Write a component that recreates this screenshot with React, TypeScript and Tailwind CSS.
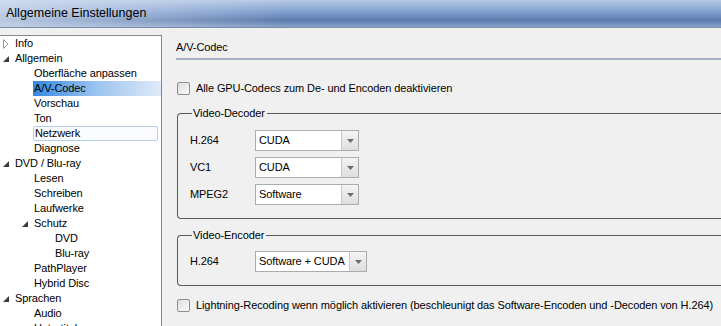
import React from "react";

type TreeItem = {
  label: string;
  level: number;
  arrow?: "open" | "closed";
  selected?: boolean;
  hover?: boolean;
};

const treeItems: TreeItem[] = [
  { label: "Info", level: 0, arrow: "closed" },
  { label: "Allgemein", level: 0, arrow: "open" },
  { label: "Oberfläche anpassen", level: 1 },
  { label: "A/V-Codec", level: 1, selected: true },
  { label: "Vorschau", level: 1 },
  { label: "Ton", level: 1 },
  { label: "Netzwerk", level: 1, hover: true },
  { label: "Diagnose", level: 1 },
  { label: "DVD / Blu-ray", level: 0, arrow: "open" },
  { label: "Lesen", level: 1 },
  { label: "Schreiben", level: 1 },
  { label: "Laufwerke", level: 1 },
  { label: "Schutz", level: 1, arrow: "open" },
  { label: "DVD", level: 2 },
  { label: "Blu-ray", level: 2 },
  { label: "PathPlayer", level: 1 },
  { label: "Hybrid Disc", level: 1 },
  { label: "Sprachen", level: 0, arrow: "open" },
  { label: "Audio", level: 1 },
  { label: "Untertitel", level: 1 },
];

const indent: Record<number, string> = {
  0: "pl-[1px]",
  1: "pl-[20px]",
  2: "pl-[41px]",
};

function Arrow({ kind }: { kind?: "open" | "closed" }) {
  if (kind === "closed") {
    return (
      <svg width="13" height="15" viewBox="0 0 13 15" className="shrink-0">
        <path d="M2.5 3.5 L7 8 L2.5 12.5 Z" fill="none" stroke="#9a9a9a" />
      </svg>
    );
  }
  if (kind === "open") {
    return (
      <svg width="13" height="15" viewBox="0 0 13 15" className="shrink-0">
        <path d="M8 5 L8 11 L2 11 Z" fill="#3c3c3c" />
      </svg>
    );
  }
  return <span className="w-[13px] shrink-0" />;
}

function TreeRow({ item }: { item: TreeItem }) {
  return (
    <div className={`flex h-[15px] items-center whitespace-nowrap ${indent[item.level]}`}>
      <Arrow kind={item.arrow} />
      {item.selected ? (
        <div className="flex h-[15px] flex-1 items-center bg-[linear-gradient(to_right,#3588e2,#9cc4ef_50%,#dfeaf8)] pl-[1px]">
          {item.label}
        </div>
      ) : item.hover ? (
        <div className="mr-[3px] flex h-[15px] flex-1 items-center rounded-[2px] border border-[#b4cfee] bg-[#fafcff] pl-[1px]">
          {item.label}
        </div>
      ) : (
        <div className="pl-[1px]">{item.label}</div>
      )}
    </div>
  );
}

function Checkbox({ label }: { label: string }) {
  return (
    <div className="ml-[1px] flex h-[15px] items-center gap-[6px]">
      <span className="h-[13px] w-[13px] shrink-0 rounded-[2px] border border-[#8e8f8f] bg-[linear-gradient(135deg,#dcdcdc,#fbfbfb)]" />
      <span className="whitespace-nowrap">{label}</span>
    </div>
  );
}

function Dropdown({ value, width }: { value: string; width: string }) {
  return (
    <div className={`flex h-[21px] ${width} border border-[#acacac] bg-white`}>
      <div className="flex flex-1 items-center whitespace-nowrap pl-[3px]">{value}</div>
      <div className="flex w-[17px] items-center justify-center border-l border-[#c8c8c8] bg-[linear-gradient(to_bottom,#f4f4f4,#dedede)]">
        <svg width="7" height="4" viewBox="0 0 7 4">
          <path d="M0 0 H7 L3.5 4 Z" fill="#6d6d6d" />
        </svg>
      </div>
    </div>
  );
}

function GroupBox({
  title,
  children,
  className,
}: {
  title: string;
  children: React.ReactNode;
  className?: string;
}) {
  return (
    <div className={`ml-[1px] w-[580px] shrink-0 ${className ?? ""}`}>
      <div className="flex h-[15px]">
        <div className="mt-[7px] w-[15px] rounded-tl-[4px] border-l border-t border-[#5b5b5b]" />
        <div className="pl-[1px] pr-[2px] leading-[15px]">{title}</div>
        <div className="mt-[7px] flex-1 border-t border-[#5b5b5b]" />
      </div>
      <div className="rounded-b-[4px] border-b border-l border-[#5b5b5b]">
        {children}
      </div>
    </div>
  );
}

function Row({ label, children }: { label: string; children: React.ReactNode }) {
  return (
    <div className="flex items-center">
      <div className="w-[65px] shrink-0">{label}</div>
      {children}
    </div>
  );
}

export default function App() {
  return (
    <div className="flex h-[326px] w-[721px] flex-col overflow-hidden bg-[#f0f0f0] font-['Liberation_Sans',Arial,sans-serif] text-[11px] tracking-[-0.1px] text-black">
      {/* title bar */}
      <div className="flex h-[28px] shrink-0 items-center border-b border-[#7c8ca6] bg-[linear-gradient(to_right,rgba(215,226,242,0.75),rgba(215,226,242,0)_40%),linear-gradient(to_bottom,#b7cae6,#7f9dcd_45%,#5c7aab_75%,#89a2c9)] pl-[6px]">
        <span className="text-[12.5px] tracking-normal">Allgemeine Einstellungen</span>
      </div>

      <div className="flex min-h-0 flex-1">
        {/* tree */}
        <div className="mt-[7px] w-[162px] shrink-0 overflow-hidden border-r border-t border-[#828790] bg-white">
          {treeItems.map((item) => (
            <TreeRow key={item.label + item.level} item={item} />
          ))}
        </div>

        {/* settings page */}
        <div className="flex min-w-0 flex-1 flex-col overflow-hidden pl-[14px]">
          <div className="mt-[12px] h-[15px] leading-[15px]">A/V-Codec</div>
          <div className="mt-[3px] h-[2px] bg-[#a6b0c0]" />

          <div className="mt-[21px]">
            <Checkbox label="Alle GPU-Codecs zum De- und Encoden deaktivieren" />
          </div>

          <GroupBox title="Video-Decoder" className="mt-[10px]">
            <div className="flex flex-col gap-[6px] pb-[13px] pl-[12px] pt-[9px]">
              <Row label="H.264">
                <Dropdown value="CUDA" width="w-[104px]" />
              </Row>
              <Row label="VC1">
                <Dropdown value="CUDA" width="w-[104px]" />
              </Row>
              <Row label="MPEG2">
                <Dropdown value="Software" width="w-[104px]" />
              </Row>
            </div>
          </GroupBox>

          <GroupBox title="Video-Encoder" className="mt-[9px]">
            <div className="flex flex-col pb-[13px] pl-[12px] pt-[8px]">
              <Row label="H.264">
                <Dropdown value="Software + CUDA" width="w-[112px]" />
              </Row>
            </div>
          </GroupBox>

          <div className="mt-[12px]">
            <Checkbox label="Lightning-Recoding wenn möglich aktivieren (beschleunigt das Software-Encoden und -Decoden von H.264)" />
          </div>
        </div>
      </div>
    </div>
  );
}
